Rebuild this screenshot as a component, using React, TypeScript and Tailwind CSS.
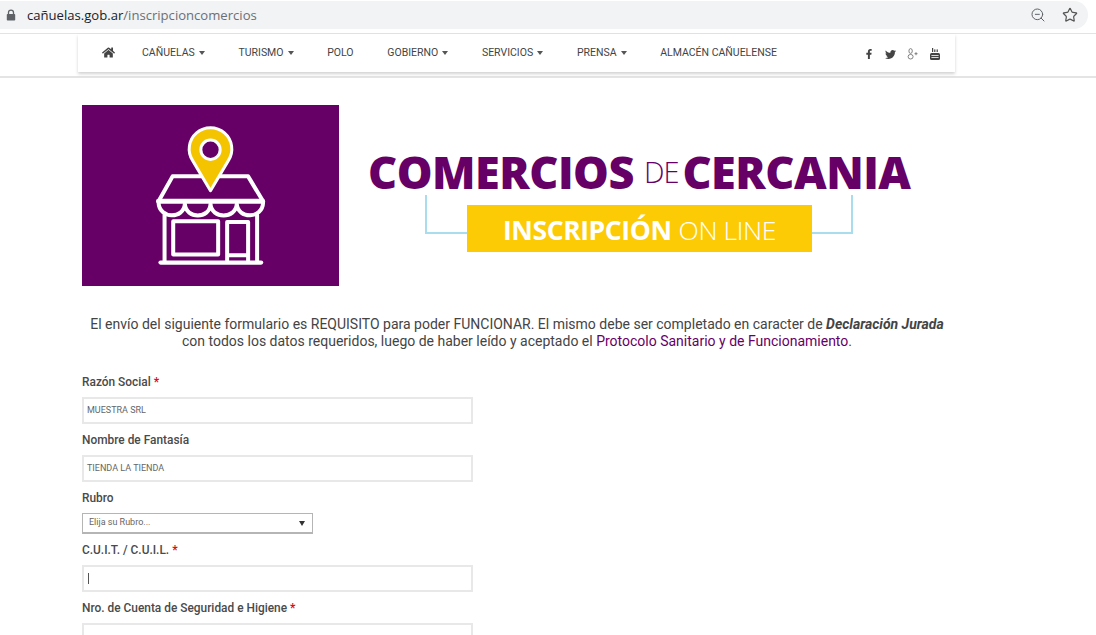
import { Star, ZoomOut } from 'lucide-react'
import { FaFacebookF, FaHome, FaTwitter } from 'react-icons/fa'

const navItems = [
  { label: 'CAÑUELAS', caret: true },
  { label: 'TURISMO', caret: true },
  { label: 'POLO', caret: false },
  { label: 'GOBIERNO', caret: true },
  { label: 'SERVICIOS', caret: true },
  { label: 'PRENSA', caret: true },
  { label: 'ALMACÉN CAÑUELENSE', caret: false },
]

function Caret() {
  return <span className="ml-[4px] inline-block h-0 w-0 border-x-[3.5px] border-t-[4px] border-x-transparent border-t-[#555] align-middle" />
}

function LockIcon() {
  return (
    <svg width="10" height="12" viewBox="0 0 10 12" fill="none">
      <path d="M2.5 5.5 V3.6 A2.5 2.5 0 0 1 7.5 3.6 V5.5" stroke="#5f6368" strokeWidth="1.3" />
      <rect x="0.8" y="5" width="8.4" height="6.6" rx="0.8" fill="#5f6368" />
    </svg>
  )
}

function GooglePlusIcon() {
  return (
    <svg width="12" height="12" viewBox="0 0 12 12" fill="none" stroke="#666" strokeWidth="0.8">
      <ellipse cx="3.6" cy="3" rx="1.7" ry="2.4" />
      <ellipse cx="3.6" cy="8.7" rx="2.5" ry="2.3" />
      <path d="M9 4.2 V7.2 M7.5 5.7 H10.5" />
    </svg>
  )
}

function YoutubeIcon() {
  return (
    <svg width="10" height="12" viewBox="0 0 10 12" fill="#444">
      <rect x="0" y="5" width="10" height="7" rx="1.5" />
      <rect x="2" y="0" width="1.2" height="4" />
      <rect x="4.2" y="1.4" width="1.2" height="2.6" />
      <rect x="6.6" y="1.4" width="1.2" height="2.6" />
      <rect x="1.4" y="7" width="7.2" height="0.8" fill="#fff" />
      <rect x="1.4" y="9.2" width="7.2" height="0.8" fill="#fff" />
    </svg>
  )
}

function ShopIcon() {
  return (
    <svg width="257" height="181" viewBox="36 30 772 541" className="block">
      <g fill="none" stroke="#fff" strokeWidth="12" strokeLinecap="round" strokeLinejoin="round">
        <path d="M266 318 L308 243 H535 L580 318" />
        <path d="M266 318 H578" strokeWidth="15" />
        <path d="M266 322 C268 372 342 372 345 326 C348 372 420 372 422 326 C425 372 498 372 501 326 C504 372 578 372 580 322" />
        <path d="M284 358 V500 M562 358 V500" />
        <path d="M272 502 H574" strokeWidth="13" />
        <rect x="310" y="378" width="135" height="100" />
        <path d="M472 500 V380 H535 V500 M472 480 H535" />
      </g>
      <path d="M422 286 L368 195 A64 64 0 1 1 476 195 Z" fill="#f5c400" stroke="#fff" strokeWidth="9" strokeLinejoin="round" />
      <circle cx="422" cy="163" r="29" fill="#660066" stroke="#fff" strokeWidth="9" />
    </svg>
  )
}

function Label({ text, required }: { text: string; required?: boolean }) {
  return (
    <div className="h-[16px] text-[11.9px] leading-[18px] font-medium text-[#4a4a4a]">
      {text}
      {required && <span className="ml-[3px] font-bold text-[#d0141c]">*</span>}
    </div>
  )
}

function TextBox({ value, caret }: { value?: string; caret?: boolean }) {
  return (
    <div className="flex h-[27px] w-[391px] items-center border-2 border-[#e8e8e8] bg-white pl-[3px] text-[9px] text-[#666]">
      {value}
      {caret && <span className="ml-[1px] h-[11px] w-px bg-[#555]" />}
    </div>
  )
}

export default function App() {
  return (
    <div className="h-[635px] w-[1096px] overflow-hidden bg-white font-['Roboto',sans-serif] text-[#444]">
      {/* browser bar */}
      <div className="h-[34px] border-b border-[#e2e3e5] pt-[1px] pr-[8px]">
        <div className="flex h-[28px] items-center rounded-r-[14px] bg-[#f1f3f4] pr-[10px] pl-[6px]">
          <LockIcon />
          <div className="ml-[11px] flex-1 pt-[2px] font-['Open_Sans',sans-serif] text-[13.1px] text-[#202124]">
            cañuelas.gob.ar<span className="text-[#6b6f74]">/inscripcioncomercios</span>
          </div>
          <ZoomOut size={16} className="text-[#5f6368]" strokeWidth={1.5} />
          <Star size={16} className="ml-[16px] text-[#555]" strokeWidth={1.8} />
        </div>
      </div>

      {/* site nav */}
      <div className="h-[44px] border-b-2 border-[#e4e4e4] pl-[78px]">
        <nav className="flex h-[38px] w-[877px] items-center bg-white pr-[15px] pl-[24px] text-[10.5px] text-[#444] shadow-[0_2px_3px_rgba(0,0,0,0.18)]">
          <FaHome size={13} className="mr-[27px] mb-[2px] text-[#444]" />
          <div className="flex flex-1 items-center gap-[33.7px] pb-[1px]">
            {navItems.map((item) => (
              <span key={item.label} className="flex items-center whitespace-nowrap">
                {item.label}
                {item.caret && <Caret />}
              </span>
            ))}
          </div>
          <div className="flex items-center gap-[11px] pt-[2px]">
            <FaFacebookF size={10} />
            <FaTwitter size={11} />
            <GooglePlusIcon />
            <YoutubeIcon />
          </div>
        </nav>
      </div>

      {/* banner */}
      <div className="mt-[27px] ml-[82px] flex h-[181px]">
        <div className="bg-[#660066]">
          <ShopIcon />
        </div>
        <div className="ml-[29px] flex flex-col font-['Open_Sans',sans-serif]">
          <div className="mt-[42px] flex h-[48px] items-center leading-none whitespace-nowrap text-[#660066]">
            <span className="text-[45px] font-extrabold tracking-[-0.5px]">COMERCIOS</span>
            <span className="mr-[4px] ml-[10px] text-[29px] font-light tracking-[-1px]">DE</span>
            <span className="text-[45px] font-extrabold tracking-[-0.5px]">CERCANIA</span>
          </div>
          <div className="ml-[57px] flex items-start">
            <div className="h-[39px] w-[42px] border-b-2 border-l-2 border-[#a9dcec]" />
            <div className="mt-[10px] flex h-[47px] w-[345px] items-center justify-center bg-[#fdcb06] pt-[4px] text-[26.5px] tracking-[-0.4px] text-white">
              <span className="font-bold">INSCRIPCIÓN</span>
              <span className="ml-[7px] font-light">ON LINE</span>
            </div>
            <div className="h-[39px] w-[41px] border-r-2 border-b-2 border-[#a9dcec]" />
          </div>
        </div>
      </div>

      {/* intro */}
      <p className="mt-[30px] ml-[82px] w-[870px] text-center text-[14px] leading-[17px] text-[#444]">
        El envío del siguiente formulario es REQUISITO para poder FUNCIONAR. El mismo debe ser completado en caracter de{' '}
        <em className="font-bold">Declaración Jurada</em>
        <br />
        con todos los datos requeridos, luego de haber leído y aceptado el{' '}
        <span className="text-[#660066]">Protocolo Sanitario y de Funcionamiento</span>.
      </p>

      {/* form */}
      <form className="mt-[23px] ml-[82px] flex flex-col">
        <Label text="Razón Social" required />
        <div className="mt-[8px]"><TextBox value="MUESTRA SRL" /></div>
        <div className="mt-[7px]"><Label text="Nombre de Fantasía" /></div>
        <div className="mt-[8px]"><TextBox value="TIENDA LA TIENDA" /></div>
        <div className="mt-[7px]"><Label text="Rubro" /></div>
        <div className="mt-[8px] flex h-[21px] w-[231px] items-center justify-between border border-b-2 border-[#b5b5b5] bg-white pr-[7px] pl-[6px] text-[9px] text-[#666]">
          Elija su Rubro...
          <span className="h-0 w-0 border-x-[3px] border-t-[5px] border-x-transparent border-t-[#333]" />
        </div>
        <div className="mt-[7px]"><Label text="C.U.I.T. / C.U.I.L." required /></div>
        <div className="mt-[8px]"><TextBox caret /></div>
        <div className="mt-[7px]"><Label text="Nro. de Cuenta de Seguridad e Higiene" required /></div>
        <div className="mt-[8px]"><TextBox /></div>
      </form>
    </div>
  )
}
